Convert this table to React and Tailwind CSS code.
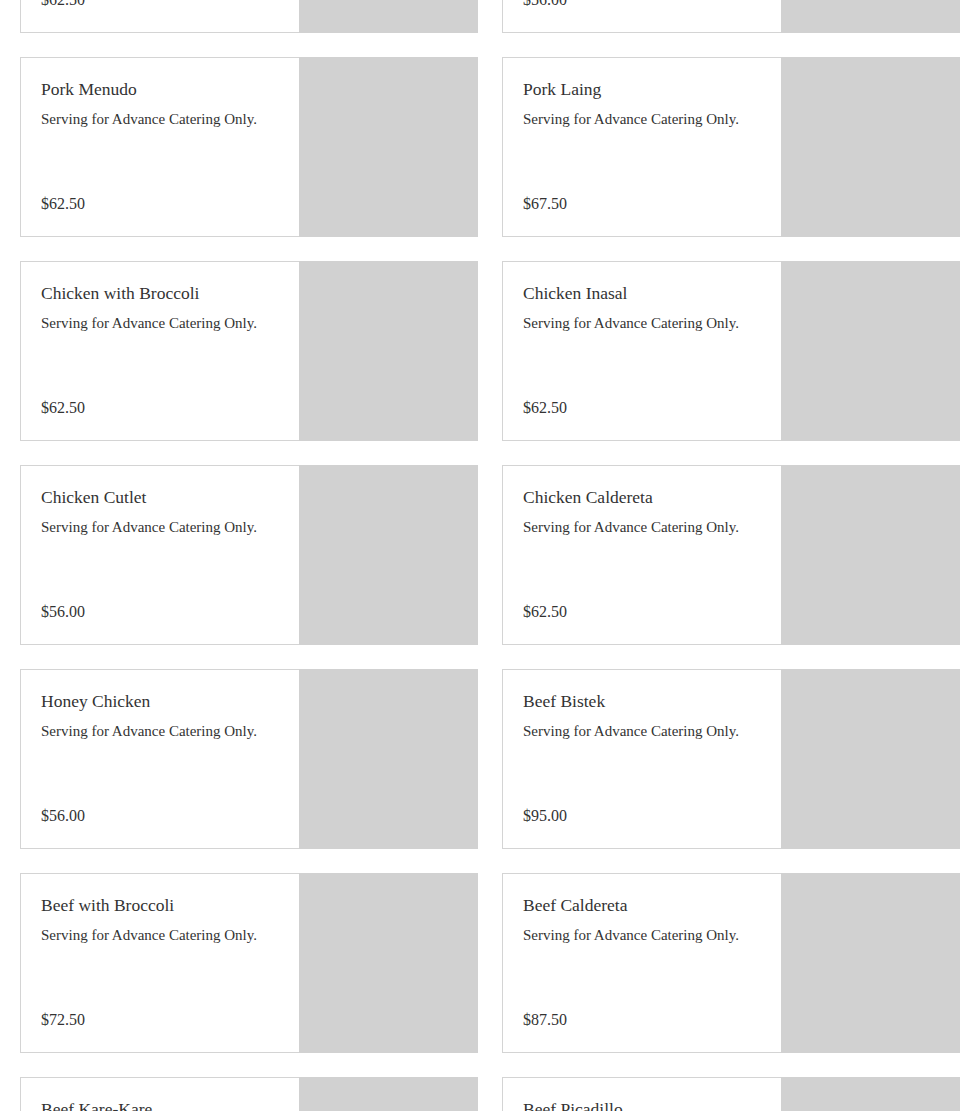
const rows = [
  [["Pork Adobo", "$62.50"], ["Pork Sisig", "$56.00"]],
  [["Pork Menudo", "$62.50"], ["Pork Laing", "$67.50"]],
  [["Chicken with Broccoli", "$62.50"], ["Chicken Inasal", "$62.50"]],
  [["Chicken Cutlet", "$56.00"], ["Chicken Caldereta", "$62.50"]],
  [["Honey Chicken", "$56.00"], ["Beef Bistek", "$95.00"]],
  [["Beef with Broccoli", "$72.50"], ["Beef Caldereta", "$87.50"]],
  [["Beef Kare-Kare", "$95.00"], ["Beef Picadillo", "$72.50"]],
];

function Card({ name, price }) {
  return (
    <div className="flex h-[180px] border border-[#d4d4d4] bg-white">
      <div className="flex flex-1 flex-col justify-between pl-[20px] pr-[10px] pt-[20px] pb-[20px] text-[#333333]">
        <div>
          <div className="text-[17.5px] leading-[22px]">{name}</div>
          <div className="mt-[8px] text-[15px] leading-[22px]">Serving for Advance Catering Only.</div>
        </div>
        <div className="text-[16px] leading-[24px]">{price}</div>
      </div>
      <div className="-my-px -mr-px w-[179px] shrink-0 bg-[#d1d1d1]" />
    </div>
  );
}

export default function App() {
  return (
    <div
      className="h-[1111px] overflow-hidden bg-white"
      style={{ fontFamily: '"Liberation Serif", "Times New Roman", serif' }}
    >
      <div className="mt-[-147px] ml-[20px] grid w-[940px] grid-cols-2 gap-[24px]">
        {rows.flat().map(([n, p], i) => (
          <Card key={i} name={n} price={p} />
        ))}
      </div>
    </div>
  );
}
